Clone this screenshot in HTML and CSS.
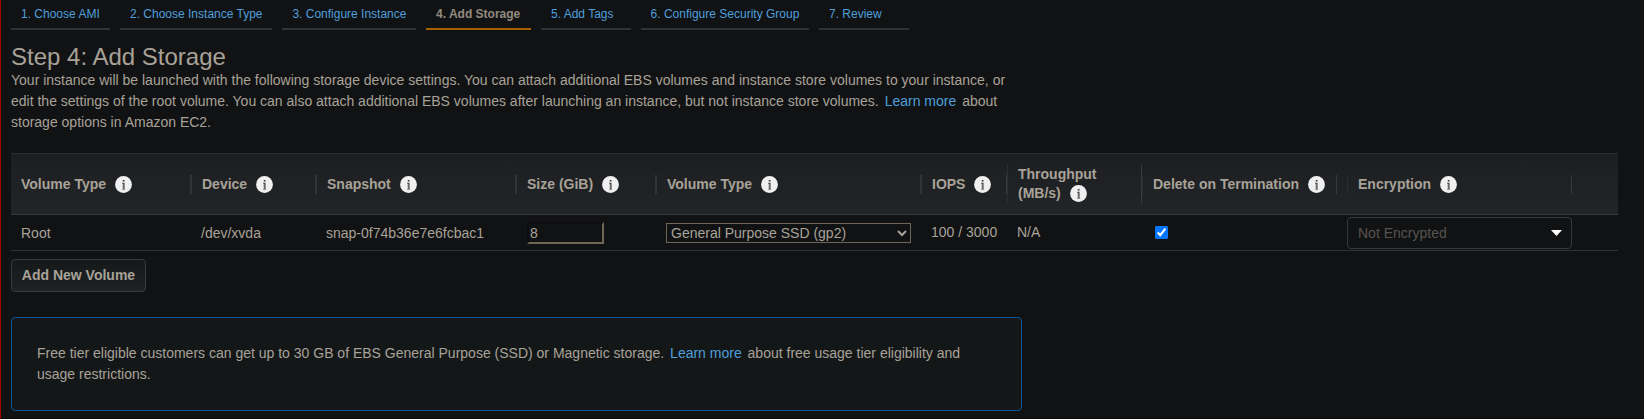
FILE: index.html
```html
<!DOCTYPE html>
<html lang="en">
<head>
<meta charset="utf-8">
<title>Step 4: Add Storage</title>
<link rel="stylesheet" href="styles.css">
</head>
<body>
<svg class="defs" width="0" height="0" aria-hidden="true">
  <symbol id="info" viewBox="0 0 17 17">
    <circle cx="8.5" cy="8.5" r="8.4" fill="#f0f0f0"/>
    <path d="M7.8 4h1.7v1.5H7.8zM7 6.8h2.5v6.2h.6v.6H7.1V13h.7V7.4H7z" fill="#333"/>
    <path d="M8 7.4h.8V13H8z" fill="#777"/>
  </symbol>
</svg>
<main class="page">
  <nav class="steps">
    <a class="step step-1">1. Choose AMI</a>
    <a class="step step-2">2. Choose Instance Type</a>
    <a class="step step-3">3. Configure Instance</a>
    <a class="step step-4 current">4. Add Storage</a>
    <a class="step step-5">5. Add Tags</a>
    <a class="step step-6">6. Configure Security Group</a>
    <a class="step step-7">7. Review</a>
  </nav>
  <h1 class="title">Step 4: Add Storage</h1>
  <p class="intro">Your instance will be launched with the following storage device settings. You can attach additional EBS volumes and instance store volumes to your instance, or<br>edit the settings of the root volume. You can also attach additional EBS volumes after launching an instance, but not instance store volumes. <a class="link">Learn more</a> about<br>storage options in Amazon EC2.</p>

  <section class="volumes">
    <div class="row head">
      <div class="th">Volume Type<svg class="info"><use href="#info"/></svg></div>
      <div class="th sep">Device<svg class="info"><use href="#info"/></svg></div>
      <div class="th sep">Snapshot<svg class="info"><use href="#info"/></svg></div>
      <div class="th sep">Size (GiB)<svg class="info"><use href="#info"/></svg></div>
      <div class="th sep">Volume Type<svg class="info"><use href="#info"/></svg></div>
      <div class="th sep">IOPS<svg class="info"><use href="#info"/></svg></div>
      <div class="th split-left"><div>Throughput<div class="second">(MB/s)<svg class="info"><use href="#info"/></svg></div></div></div>
      <div class="th split-right">Delete on Termination<svg class="info"><use href="#info"/></svg><span class="end"></span></div>
      <div class="th sep thin">Encryption<svg class="info"><use href="#info"/></svg><span class="end"></span></div>
    </div>
    <div class="row data">
      <div class="td">Root</div>
      <div class="td">/dev/xvda</div>
      <div class="td">snap-0f74b36e7e6fcbac1</div>
      <div class="td"><input class="size" type="text" value="8"></div>
      <div class="td"><select class="type"><option>General Purpose SSD (gp2)</option></select></div>
      <div class="td up">100 / 3000</div>
      <div class="td up">N/A</div>
      <div class="td mid"><input class="check" type="checkbox" checked></div>
      <div class="td enc"><div class="dropdown"><span>Not Encrypted</span><svg width="11" height="6" viewBox="0 0 11 6"><path d="M0 0h11L5.5 6z" fill="#fff"/></svg></div></div>
    </div>
  </section>
  <button class="add">Add New Volume</button>

  <aside class="notice">Free tier eligible customers can get up to 30 GB of EBS General Purpose (SSD) or Magnetic storage. <a class="link">Learn more</a> about free usage tier eligibility and<br>usage restrictions.</aside>
</main>
</body>
</html>
```
FILE: styles.css
```css
* { box-sizing: border-box; }
body {
  margin: 0;
  background: #111214;
  color: #a8a298;
  font: 14px/21px "Liberation Sans", Arial, sans-serif;
}
.defs { display: block; }
.page {
  height: 419px;
  padding-left: 10px;
  border-left: 1px solid #a80000;
  border-bottom: 1px solid #0a0a0b;
  overflow: hidden;
}
.steps { display: flex; gap: 10px; height: 30px; }
.step {
  height: 30px;
  padding: 4px 0 0 10px;
  border-bottom: 2px solid #303235;
  color: #4f9fdb;
  font-size: 12px;
  line-height: 20px;
  white-space: nowrap;
}
.step-1 { width: 99px; }
.step-2 { width: 152px; }
.step-3 { width: 134px; padding-left: 10.4px; }
.step-4 { width: 105px; }
.step-5 { width: 90px; }
.step-6 { width: 168px; padding-left: 9.6px; }
.step-7 { width: 90px; }
.current { color: #928b7f; font-weight: bold; border-color: #a66000; }
.title {
  margin: 13px 0 0;
  font-size: 24px;
  font-weight: normal;
  line-height: 28px;
}
.intro { margin: -1px 0 0; height: 83px; white-space: nowrap; }
.link { color: #4f9fdb; margin: 0 2px; }

.volumes { width: 1607px; }
.row {
  display: grid;
  grid-template-columns: 179px 125px 200px 140px 265px 86px 135px 206px 271px;
  align-items: center;
}
.head {
  height: 62px;
  border-top: 1px solid #2b2e30;
  border-bottom: 1px solid #36393c;
  background: linear-gradient(#1d1e20, #212528);
  font-weight: bold;
}
.th {
  display: flex;
  align-items: center;
  height: 19px;
  padding-left: 10px;
  white-space: nowrap;
}
.sep { border-left: 2px solid #303538; }
.split-left, .split-right {
  height: 38px;
  padding-left: 12px;
  line-height: 19px;
  background-repeat: no-repeat;
}
.split-left {
  background-image: linear-gradient(#363b3e, #363b3e), linear-gradient(#2b2f31, #2b2f31);
  background-size: 1px 19px, 1px 38px;
  background-position: 0 10px, 1px 0;
}
.split-right {
  background-image: linear-gradient(#363b3e, #363b3e), linear-gradient(#2b2f31, #2b2f31);
  background-size: 1px 38px, 1px 19px;
  background-position: 0 0, 1px 10px;
}
.thin { border-left: 1px solid #292d2f; padding-left: 10px; }
.info { flex: none; width: 17px; height: 17px; margin-left: 9px; }
.second { display: flex; align-items: center; }
.end { width: 1px; height: 19px; background: #36393c; margin-left: 11px; }
.thin .end { margin: 0 46px 0 auto; }
.data { height: 36px; border-bottom: 1px solid #303235; }
.td {
  display: flex;
  align-items: center;
  height: 35px;
  padding: 1px 0 0 11px;
  white-space: nowrap;
}
.td:first-child { padding-left: 10px; }
.td.up { padding: 0 0 1px 11px; }
.td.mid { padding-top: 0; }
.size {
  width: 77px;
  height: 22px;
  margin: 0 0 0 1px;
  padding: 1px;
  border: 2px solid;
  border-color: #0d0d0f #6f6658 #6f6658 #0d0d0f;
  background: #111214;
  color: inherit;
  font: inherit;
}
.type {
  width: 245px;
  height: 20px;
  margin: 0;
  padding: 0;
  border: 1px solid #6f6658;
  border-radius: 0;
  background: #111214;
  color: inherit;
  font: inherit;
}
.check { width: 13px; height: 13px; margin: 0 0 0 3px; }
.td.enc { padding-left: 0; }
.dropdown {
  display: flex;
  align-items: center;
  justify-content: space-between;
  width: 225px;
  height: 32px;
  padding: 0 9px 0 10px;
  border: 1px solid #36393c;
  border-radius: 4px;
  color: #57544f;
}
.add {
  display: block;
  width: 135px;
  height: 33px;
  margin: 8px 0 0;
  padding: 0 0 2px;
  border: 1px solid #363b3e;
  border-radius: 4px;
  background: linear-gradient(#15191a, #1e2224);
  color: #a8a298;
  font: bold 14px "Liberation Sans", Arial, sans-serif;
}
.notice {
  width: 1011px;
  height: 94px;
  margin-top: 25px;
  padding: 25px 25px 0;
  border: 1px solid #0b549c;
  border-radius: 4px;
  background: #141718;
  white-space: nowrap;
}
```
